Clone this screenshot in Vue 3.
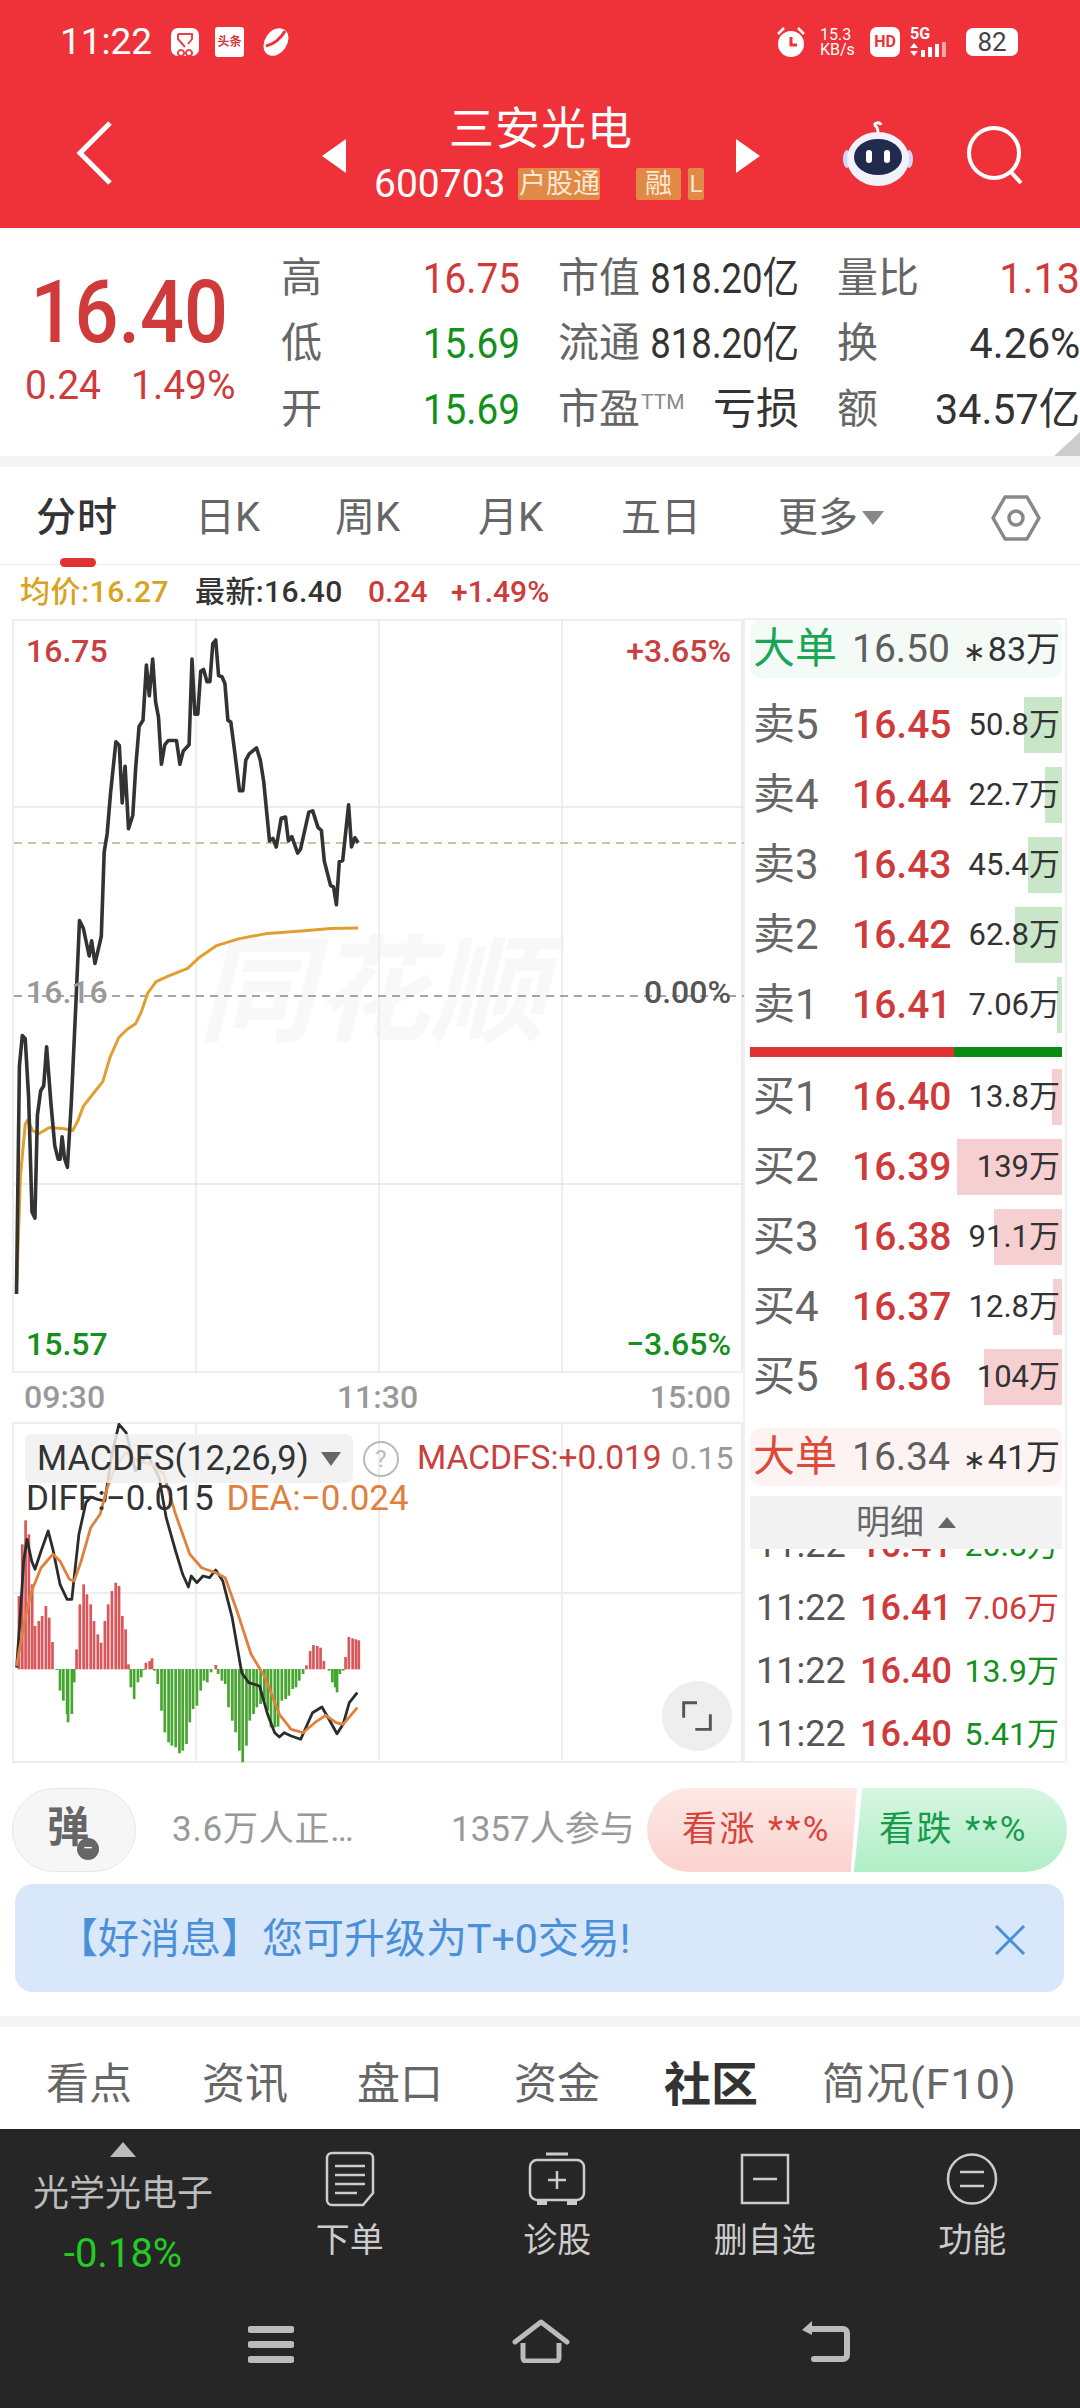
<script setup>
const mapMain = (s) => s.trim().split(/\s+/).map((p) => { const [x, y] = p.split(',').map(Number); return `${(x / 2.063).toFixed(1)},${(460 + y / 1.633).toFixed(1)}` }).join(' ')
const mapMacd = (s) => s.trim().split(/\s+/).map((p) => { const [x, y] = p.split(',').map(Number); return `${(x / 2.119).toFixed(1)},${(1420 + y / 3).toFixed(1)}` }).join(' ')
const priceLine = mapMain(`32,1362 38,990 44,940 50,945 57,1040 64,1228 70,1238 75,1070 82,1030 88,1022 94,958 103,1050 111,1120 118,1142 122,1142 126,1105 131,1140 137,1155 145,1050 155,880 162,752 170,765 182,810 187,785 194,822 207,778 213,640 219,610 226,545 237,460 244,466 250,560 256,500 263,602 272,580 278,500 285,435 293,425 300,335 306,385 313,325 319,395 325,420 331,497 338,465 345,458 362,458 369,497 376,475 388,465 394,325 400,415 406,415 412,345 418,342 425,362 431,362 437,300 443,294 449,352 456,354 462,365 468,425 474,428 482,475 492,540 499,540 505,490 512,480 527,470 535,490 542,525 554,622 561,618 568,632 578,585 587,583 593,622 600,615 612,642 618,635 635,575 643,573 654,600 661,605 667,655 680,695 686,697 692,726 698,656 705,654 717,563 723,632 730,617 737,625`)
const avgLine = mapMain(`32,1360 40,1170 50,1085 55,1078 65,1095 78,1100 100,1090 130,1092 148,1095 158,1080 170,1055 190,1035 210,1015 225,975 243,943 260,930 278,920 290,900 303,870 320,852 345,843 385,830 410,812 445,793 490,782 550,773 620,769 680,765 737,764`)
const diffLine = mapMacd(`33,740 40,600 48,420 55,355 65,420 72,445 85,390 100,330 110,385 125,490 140,535 150,535 165,340 180,245 190,228 205,235 220,240 235,100 250,10 265,35 285,150 310,100 335,170 350,290 370,390 385,460 397,498 403,465 415,485 428,465 442,470 455,447 470,480 490,590 510,755 525,785 548,795 565,880 580,935 590,948 600,935 615,945 635,955 660,875 680,858 695,895 712,938 725,910 738,845 755,815`)
const deaLine = mapMacd(`33,735 50,600 65,510 85,440 110,400 125,420 145,475 155,480 170,420 190,320 210,280 225,200 245,130 265,95 290,120 320,130 345,160 370,280 400,400 425,440 455,455 475,470 500,570 530,700 560,770 590,880 615,925 640,935 665,905 688,883 710,905 725,910 755,860`)
const barData = `38,525 45,370 52,298 59,340 66,490 72,615 80,600 87,585 95,555 102,590 109,663 118,748 125,810 132,840 140,880 142,905 150,880 155,785 160,685 167,550 175,490 182,520 190,550 197,600 205,640 212,665 220,600 227,550 235,510 243,485 250,495 257,585 264,625 270,730 275,800 282,835 290,785 297,770 303,748 307,725 315,720 320,712 325,750 332,790 340,870 347,935 355,965 362,975 370,980 378,998 385,990 393,970 400,905 407,865 415,855 423,810 430,780 437,785 445,755 455,732 460,760 468,780 475,790 482,860 490,900 497,935 505,990 512,1025 520,975 527,900 535,880 542,860 550,850 558,840 565,870 572,920 580,920 587,918 595,840 603,835 610,825 618,805 625,800 632,780 640,760 647,733 655,690 662,672 670,675 677,680 684,720 695,750 702,785 708,800 712,815 718,760 725,750 730,708 737,648 745,652 752,655 758,658`
const bars = barData.split(' ').map((p) => {
  const [x, t] = p.split(',').map(Number)
  const up = t < 745
  return { x: x / 2.119 - 1.3, y: up ? 1420 + t / 3 : 1668, h: Math.abs(t - 745) / 3, fill: up ? '#d9565a' : '#46a62f' }
})
const sells = [
  { l: '卖5', p: '16.45', a: '50.8', w: 38 },
  { l: '卖4', p: '16.44', a: '22.7', w: 17 },
  { l: '卖3', p: '16.43', a: '45.4', w: 34 },
  { l: '卖2', p: '16.42', a: '62.8', w: 47 },
  { l: '卖1', p: '16.41', a: '7.06', w: 5 },
]
const buys = [
  { l: '买1', p: '16.40', a: '13.8', w: 10 },
  { l: '买2', p: '16.39', a: '139', w: 105 },
  { l: '买3', p: '16.38', a: '91.1', w: 68 },
  { l: '买4', p: '16.37', a: '12.8', w: 9 },
  { l: '买5', p: '16.36', a: '104', w: 78 },
]
const ticks = [
  { t: '11:22', p: '16.41', a: '20.8万', c: 'g' },
  { t: '11:22', p: '16.41', a: '7.06万', c: 'r' },
  { t: '11:22', p: '16.40', a: '13.9万', c: 'g' },
  { t: '11:22', p: '16.40', a: '5.41万', c: 'g' },
]
const stats = [
  [{ k: '高', v: '16.75', c: 'red' }, { k: '市值', v: '818.20亿', c: '' }, { k: '量比', v: '1.13', c: 'red' }],
  [{ k: '低', v: '15.69', c: 'green' }, { k: '流通', v: '818.20亿', c: '' }, { k: '换', v: '4.26%', c: '' }],
  [{ k: '开', v: '15.69', c: 'green' }, { k: '市盈', sup: 'TTM', v: '亏损', c: 'plain' }, { k: '额', v: '34.57亿', c: '' }],
]
</script>

<template>
  <div class="page">
    <header class="head">
      <div class="status">
        <span class="clock">11:22</span>
        <svg class="si" width="28" height="28" viewBox="0 0 28 28"><rect width="28" height="28" rx="7" fill="#fff"/><path d="M7 6h14v5l-4 5M7 6v5l7 8M10 22a3 3 0 1 0 .01 0M18 22a3 3 0 1 0 .01 0" fill="none" stroke="#e8434a" stroke-width="2"/></svg>
        <span class="toutiao">头条</span>
        <svg class="si" width="32" height="30" viewBox="0 0 32 30"><ellipse cx="16" cy="15" rx="11" ry="15" transform="rotate(35 16 15)" fill="#fff"/><path d="M6 19C14 17 21 11 25 4" fill="none" stroke="#ef3239" stroke-width="3"/></svg>
        <span class="grow"></span>
        <svg width="32" height="32" viewBox="0 0 32 32"><circle cx="16" cy="18" r="13" fill="#fff"/><path d="M3 8l6-6M29 8l-6-6" stroke="#fff" stroke-width="2.5"/><path d="M16 11v8h6" fill="none" stroke="#ef3239" stroke-width="3"/></svg>
        <span class="speed"><b>15.3</b><b>KB/s</b></span>
        <span class="hd">HD</span>
        <span class="sig">
          <span class="sig-t">5G</span>
          <svg width="46" height="16" viewBox="0 0 46 16"><path d="M0 6l4-5 4 5zM0 9h8l-4 5z" fill="#fff"/><rect x="11" y="8" width="4" height="7" fill="#fff"/><rect x="18" y="5" width="4" height="10" fill="#fff"/><rect x="25" y="2" width="4" height="13" fill="#fff"/><rect x="32" y="0" width="4" height="15" fill="#f8a5a8"/></svg>
        </span>
        <span class="batt"><i>82</i></span>
      </div>
      <div class="nav">
        <svg class="back" width="37" height="64" viewBox="0 0 37 64"><path d="M34 2L4 32l30 30" fill="none" stroke="#fff" stroke-width="5"/></svg>
        <svg class="tri-l" width="24" height="34" viewBox="0 0 24 34"><path d="M24 0v34L0 17z" fill="#fff"/></svg>
        <div class="title">
          <div class="name">三安光电</div>
          <div class="code">
            <span class="num">600703</span>
            <span class="tag t1"><span>户股通</span></span>
            <span class="tag t2">融</span>
            <span class="tag t3">L</span>
          </div>
        </div>
        <svg class="tri-r" width="24" height="34" viewBox="0 0 24 34"><path d="M0 0v34l24-17z" fill="#fff"/></svg>
        <svg class="robot" width="72" height="66" viewBox="0 0 72 66"><path d="M36 14c0-6-1-8-4-9M32 5c2-3 6-3 7 0" fill="none" stroke="#fff" stroke-width="3"/><ellipse cx="5" cy="39" rx="4" ry="9" fill="#cfd8f5"/><ellipse cx="67" cy="39" rx="4" ry="9" fill="#cfd8f5"/><ellipse cx="36" cy="39" rx="31" ry="27" fill="#f2f2fb"/><ellipse cx="36" cy="37" rx="24" ry="18" fill="#1f2a4d"/><rect x="24" y="30" width="6" height="13" rx="3" fill="#fff"/><rect x="42" y="30" width="6" height="13" rx="3" fill="#fff"/></svg>
        <svg class="search" width="60" height="58" viewBox="0 0 60 58"><circle cx="28" cy="27" r="25" fill="none" stroke="#fff" stroke-width="4"/><path d="M44 45l11 12" stroke="#fff" stroke-width="4"/></svg>
      </div>
    </header>

    <section class="stats">
      <div class="quote">
        <div class="big"><span>16.40</span></div>
        <div class="chg"><span>0.24</span><span>1.49%</span></div>
      </div>
      <div class="grid">
        <template v-for="(row, i) in stats" :key="i">
          <div v-for="cell in row" :key="cell.k" class="cell">
            <span class="k">{{ cell.k }}<sup v-if="cell.sup">{{ cell.sup }}</sup></span>
            <span class="v" :class="cell.c">{{ cell.v }}</span>
          </div>
        </template>
      </div>
      <i class="corner"></i>
    </section>
    <div class="band b1"></div>

    <nav class="tabs">
      <span class="on">分时<i></i></span><span>日K</span><span>周K</span><span>月K</span><span>五日</span>
      <span class="more">更多<em></em></span>
      <svg class="hex" width="50" height="46" viewBox="0 0 50 46"><path d="M14 2h22l12 21-12 21H14L2 23z" fill="none" stroke="#888" stroke-width="3.5" stroke-linejoin="round"/><circle cx="25" cy="23" r="7" fill="none" stroke="#888" stroke-width="3.5"/></svg>
    </nav>

    <div class="info">
      <span class="avg">均价:16.27</span>
      <span class="last">最新:16.40</span>
      <span class="red s1">0.24</span>
      <span class="red">+1.49%</span>
    </div>

    <section class="market">
      <div class="charts">
        <div class="main">
          <span class="mark">同花顺</span>
          <svg class="plot" viewBox="12 620 732 752" width="732" height="752">
            <path d="M195 620V1372M378 620V1372M561 620V1372" stroke="#eee" stroke-width="2" fill="none"/>
            <path d="M13 807H743M13 1184H743" stroke="#e6e6e6" stroke-width="1.5" fill="none"/>
            <path d="M13 843H743" stroke="#c8ac7c" stroke-width="1.5" stroke-dasharray="8 6" fill="none"/>
            <path d="M13 996H743" stroke="#888" stroke-width="1.5" stroke-dasharray="8 6" fill="none"/>
            <polyline :points="avgLine" fill="none" stroke="#e0a030" stroke-width="3" stroke-linejoin="round"/>
            <polyline :points="priceLine" fill="none" stroke="#333" stroke-width="3.6" stroke-linejoin="round"/>
          </svg>
          <span class="lb tl red2">16.75</span>
          <span class="lb tr red2">+3.65%</span>
          <span class="lb ml grey">16.16</span>
          <span class="lb mr dim">0.00%</span>
          <span class="lb bl green">15.57</span>
          <span class="lb br green">−3.65%</span>
        </div>
        <div class="axis"><span>09:30</span><span>11:30</span><span>15:00</span></div>
        <div class="macd">
          <svg class="plot" viewBox="12 1422 732 340" width="732" height="340">
            <path d="M195 1422V1762M378 1422V1762M561 1422V1762" stroke="#eee" stroke-width="2" fill="none"/>
            <path d="M13 1592H743" stroke="#eee" stroke-width="2" fill="none"/>
            <rect v-for="(b, i) in bars" :key="i" :x="b.x" :y="b.y" width="2.7" :height="b.h" :fill="b.fill"/>
            <polyline :points="diffLine" fill="none" stroke="#2c2c2c" stroke-width="2.8" stroke-linejoin="round"/>
            <polyline :points="deaLine" fill="none" stroke="#e0803e" stroke-width="2.8" stroke-linejoin="round"/>
          </svg>
          <div class="mtop">
            <span class="chip"><span class="chipt">MACDFS(12,26,9)</span><em></em></span>
            <span class="help">?</span>
            <span class="mv">MACDFS:+0.019</span>
            <span class="mx">0.15</span>
          </div>
          <div class="msub"><span>DIFF:−0.015</span><span class="dea">DEA:−0.024</span></div>
          <span class="expand"><svg width="30" height="30" viewBox="0 0 36 36"><path d="M2 20V2h16M34 16v18H16" fill="none" stroke="#555" stroke-width="3.5"/></svg></span>
        </div>
      </div>

      <aside class="book">
        <div class="big-row gr"><b>大单</b><span class="bp">16.50</span><span class="ba"><i>∗</i>83万</span></div>
        <div class="rows first">
          <div v-for="r in sells" :key="r.l" class="row">
            <i class="bar sell" :style="{ width: r.w + 'px' }"></i>
            <span class="lab">{{ r.l }}</span><span class="pr">{{ r.p }}</span><span class="am">{{ r.a }}万</span>
          </div>
        </div>
        <div class="split"><i></i></div>
        <div class="rows">
          <div v-for="r in buys" :key="r.l" class="row">
            <i class="bar buy" :style="{ width: r.w + 'px' }"></i>
            <span class="lab">{{ r.l }}</span><span class="pr">{{ r.p }}</span><span class="am">{{ r.a }}万</span>
          </div>
        </div>
        <div class="big-row rd"><b>大单</b><span class="bp">16.34</span><span class="ba"><i>∗</i>41万</span></div>
        <div class="detail">明细<em></em></div>
        <div class="ticks">
          <div class="ticks-in">
            <div v-for="(t, i) in ticks" :key="i" class="tick">
              <span class="tt">{{ t.t }}</span><span class="tp">{{ t.p }}</span><span class="ta" :class="t.c">{{ t.a }}</span>
            </div>
          </div>
        </div>
      </aside>
    </section>

    <section class="act">
      <span class="dan">弹<i>−</i></span>
      <span class="txt t-a">3.6万人正…</span>
      <span class="txt t-b">1357人参与</span>
      <span class="vote up">看涨 **%</span>
      <span class="vote down">看跌 **%</span>
    </section>

    <section class="banner">
      <span>【好消息】您可升级为T+0交易!</span>
      <svg width="32" height="30" viewBox="0 0 32 30"><path d="M2 1l28 28M30 1L2 29" stroke="#4a90d9" stroke-width="3" fill="none"/></svg>
    </section>
    <div class="band b2"></div>

    <nav class="tabs2">
      <span>看点</span><span>资讯</span><span>盘口</span><span>资金</span><span class="on2">社区</span><span class="f10">简况(F10)</span>
    </nav>

    <footer class="dock">
      <div class="tools">
        <div class="stock">
          <i class="up-tri"></i>
          <span class="sn">光学光电子</span>
          <span class="sp">-0.18%</span>
        </div>
        <div class="tool">
          <svg width="50" height="56" viewBox="0 0 50 56"><path d="M7 2h36a5 5 0 0 1 5 5v35l-10 12H7a5 5 0 0 1-5-5V7a5 5 0 0 1 5-5z" fill="none" stroke="#ccc" stroke-width="2.5"/><path d="M10 15h30M10 24h30M10 33h30M10 42h22" stroke="#ccc" stroke-width="2.5"/></svg>
          <span>下单</span>
        </div>
        <div class="tool">
          <svg width="58" height="54" viewBox="0 0 58 54"><path d="M18 2h22" stroke="#ccc" stroke-width="3"/><rect x="2" y="8" width="54" height="40" rx="7" fill="none" stroke="#ccc" stroke-width="2.5"/><path d="M29 19v18M20 28h18" stroke="#ccc" stroke-width="2.5"/><path d="M9 48h10v5H9zM39 48h10v5H39z" fill="#ccc"/></svg>
          <span>诊股</span>
        </div>
        <div class="tool">
          <svg width="50" height="52" viewBox="0 0 50 52"><rect x="2" y="2" width="46" height="48" fill="none" stroke="#ccc" stroke-width="2.5"/><path d="M13 26h24" stroke="#ccc" stroke-width="2.5"/></svg>
          <span>删自选</span>
        </div>
        <div class="tool">
          <svg width="52" height="52" viewBox="0 0 52 52"><ellipse cx="26" cy="26" rx="24" ry="24.5" fill="none" stroke="#ccc" stroke-width="2.5"/><path d="M14 19h24M14 33h24" stroke="#ccc" stroke-width="2.5"/></svg>
          <span>功能</span>
        </div>
      </div>
      <div class="sysnav">
        <svg width="46" height="37" viewBox="0 0 46 37"><path d="M3 3.5h40M3 18.5h40M3 33.5h40" stroke="#bbb" stroke-width="7" stroke-linecap="round"/></svg>
        <svg width="58" height="44" viewBox="0 0 58 44"><path d="M3 23L29 3l26 20" fill="none" stroke="#bbb" stroke-width="5" stroke-linejoin="round" stroke-linecap="round"/><path d="M11 24v15a3 3 0 0 0 3 3h30a3 3 0 0 0 3-3V24" fill="none" stroke="#bbb" stroke-width="5"/></svg>
        <svg class="ret" width="50" height="42" viewBox="0 0 50 42"><path d="M11 0L1 9l10 5z" fill="#bbb"/><path d="M9 8h33a4 4 0 0 1 4 4v22a4 4 0 0 1-4 4H13" fill="none" stroke="#bbb" stroke-width="6" stroke-linecap="round"/></svg>
      </div>
    </footer>
  </div>
</template>

<style scoped>
.page { width: 1080px; height: 2408px; overflow: hidden; background: #fff; display: flex; flex-direction: column; font-family: Roboto, "Noto Sans CJK SC", sans-serif; color: #333; line-height: 1.2; }
.red { color: #cf3a3a; }
.red2 { color: #c84040; }
.green { color: #14901c; }
.grey { color: #999; }
.dim { color: #555; }

.head { height: 228px; flex: none; background: #ef3239; color: #fff; display: flex; flex-direction: column; }
.status { height: 84px; padding: 0 62px 0 60px; display: flex; align-items: center; }
.clock { font-size: 37px; width: 111px; }
.si { flex: none; margin-right: 16px; }
.toutiao { width: 29px; height: 30px; margin-right: 16px; background: #fff; color: #d8353b; font-size: 12px; line-height: 30px; text-align: center; font-weight: 700; border-radius: 3px; white-space: nowrap; overflow: hidden; }
.grow { flex: 1; }
.speed { display: flex; flex-direction: column; width: 36px; margin: 0 14px 0 13px; font-size: 16px; line-height: 15px; }
.speed b { font-weight: 400; white-space: nowrap; }
.hd { width: 30px; height: 30px; background: #fff; color: #ef3239; border-radius: 7px; font-size: 16px; font-weight: 700; line-height: 30px; text-align: center; margin-right: 10px; }
.sig { width: 46px; height: 32px; display: flex; flex-direction: column; margin-right: 10px; }
.sig-t { font-size: 16px; line-height: 16px; font-weight: 700; }
.batt { width: 52px; height: 28px; background: #fff; border-radius: 7px; color: #444; font-size: 26px; line-height: 28px; text-align: center; }
.batt i { font-style: normal; }

.nav { flex: 1; display: flex; align-items: flex-start; position: relative; padding-left: 76px; }
.back { margin-top: 37px; flex: none; }
.tri-l { margin: 55px 0 0 209px; flex: none; }
.title { width: 390px; flex: none; display: flex; flex-direction: column; align-items: center; }
.name { font-size: 45px; line-height: 60px; margin-top: 16px; letter-spacing: 1px; }
.code { display: flex; align-items: center; height: 32px; margin-top: 8px; width: 330px; margin-left: -4px; }
.num { font-size: 39px; line-height: 32px; width: 144px; }
.tag { background: #e08a45; color: #fbe7d3; height: 32px; line-height: 32px; font-size: 27px; border-radius: 2px; overflow: hidden; display: flex; justify-content: flex-end; white-space: nowrap; }
.t1 { width: 82px; }
.t2 { width: 45px; margin-left: 36px; justify-content: center; }
.t3 { width: 16px; margin-left: 7px; justify-content: center; font-size: 24px; }
.tri-r { margin-top: 55px; flex: none; }
.robot { margin: 36px 0 0 82px; flex: none; }
.search { margin: 42px 0 0 52px; flex: none; }

.stats { height: 228px; flex: none; display: flex; position: relative; overflow: hidden; }
.quote { width: 281px; flex: none; color: #cf3a3a; }
.big { font-size: 88px; line-height: 100px; margin-top: 34px; width: 258px; text-align: center; font-weight: 500; }
.big span { display: inline-block; transform: scaleX(.88); }
.chg { display: flex; font-size: 41px; line-height: 44px; margin: 1px 0 0 25px; gap: 30px; }
.chg span { display: inline-block; transform: scaleX(.95); transform-origin: left center; width: 76px; white-space: nowrap; }
.grid { flex: 1; display: grid; grid-template-columns: 239px 241px 243px; grid-auto-rows: 65.5px; column-gap: 38px; padding-top: 17px; }
.cell { display: flex; justify-content: space-between; align-items: center; white-space: nowrap; }
.cell:nth-child(3n + 1) .v { transform: scaleX(.9); }
.cell:nth-child(3n) .v { transform: scaleX(.96); }
.k { font-size: 41px; color: #666; line-height: 50px; flex: none; }
.k sup { font-size: 21px; color: #888; vertical-align: 14px; line-height: 0; margin-left: 1px; }
.v { font-size: 43px; line-height: 50px; display: inline-block; margin-left: -40px; transform: scaleX(.85); transform-origin: right center; color: #333; }
.v.red { color: #cf3a3a; }
.v.green { color: #14901c; }
.v.plain { transform: none; }
.corner { position: absolute; right: 0; bottom: 0; width: 26px; height: 24px; background: #ccc; clip-path: polygon(100% 0, 100% 100%, 0 100%); }

.band { background: #f4f4f4; flex: none; }
.b1 { height: 11px; }
.b2 { height: 11px; margin-top: 24px; }

.tabs { height: 98px; box-sizing: border-box; flex: none; border-bottom: 1px solid #eee; padding: 4px 0 0 36px; display: grid; grid-template-columns: 159px 140px 143px 143px 157px 213px 50px; align-items: center; font-size: 40px; color: #666; position: relative; }
.tabs .on { color: #333; font-weight: 500; position: relative; letter-spacing: 1px; }
.tabs .on i { position: absolute; left: 24px; bottom: -25px; width: 36px; height: 9px; border-radius: 5px; background: #e03232; }
.more em { display: inline-block; margin-left: 4px; vertical-align: 6px; border: 11px solid transparent; border-top: 14px solid #888; border-bottom: 0; }

.info { height: 53px; flex: none; display: flex; align-items: center; padding-left: 20px; font-size: 30px; font-weight: 500; }
.avg { color: #d9a21f; width: 175px; letter-spacing: .6px; white-space: nowrap; }
.last { width: 173px; color: #333; letter-spacing: .4px; white-space: nowrap; }
.s1 { width: 83px; }

.market { height: 1145px; flex: none; display: flex; padding-left: 12px; }
.charts { width: 731px; flex: none; display: flex; flex-direction: column; }
.main { height: 754px; position: relative; border: 2px solid #eee; box-sizing: border-box; margin-top: 1px; }
.plot { position: absolute; left: -1px; top: -1px; display: block; }
.mark { position: absolute; left: 184px; top: 306px; font-size: 116px; line-height: 130px; font-weight: 700; font-style: italic; color: #f8f8f8; white-space: nowrap; }
.lb { position: absolute; font-size: 32px; line-height: 38px; font-weight: 500; white-space: nowrap; }
.tl { left: 12px; top: 11px; }
.tr { right: 10px; top: 11px; }
.ml { left: 12px; top: 352px; }
.mr { right: 10px; top: 352px; }
.bl { left: 12px; top: 704px; }
.br { right: 10px; top: 704px; }
.axis { height: 49px; flex: none; display: flex; justify-content: space-between; align-items: center; padding: 0 12px; font-size: 32px; color: #999; font-weight: 500; }
.macd { height: 341px; position: relative; border: 2px solid #eee; box-sizing: border-box; }
.mtop { position: relative; display: flex; align-items: center; margin: 10px 0 0 11px; height: 49px; }
.chip { width: 328px; height: 49px; background: rgba(240, 240, 240, .85); border-radius: 6px; display: flex; align-items: center; padding-left: 12px; box-sizing: border-box; font-size: 34.5px; white-space: nowrap; flex: none; }
.chipt { width: 284px; flex: none; }
.chip em, .detail em { display: inline-block; }
.chip em { border: 10px solid transparent; border-top: 14px solid #666; border-bottom: 0; }
.help { width: 32px; height: 32px; border: 2px solid #bbb; border-radius: 50%; color: #bbb; font-size: 24px; line-height: 32px; text-align: center; margin-left: 10px; flex: none; }
.mv { font-size: 33.5px; color: #c84040; margin-left: 18px; width: 254px; flex: none; white-space: nowrap; }
.mx { font-size: 32px; color: #999; }
.msub { position: relative; display: flex; margin: -4px 0 0 12px; font-size: 35px; line-height: 40px; gap: 13px; white-space: nowrap; color: #333; }
.dea { color: #e0803e; }
.expand { position: absolute; right: 9px; top: 257px; width: 70px; height: 70px; border-radius: 50%; background: #eee; display: flex; align-items: center; justify-content: center; }

.book { width: 324px; flex: none; box-sizing: border-box; border: 2px solid #f0f0f0; padding: 0 3px 0 5px; }
.big-row { height: 58px; border-radius: 10px; display: flex; align-items: center; padding: 0 2px 0 3px; }
.big-row b { font-weight: 400; font-size: 42px; width: 99px; flex: none; }
.big-row.gr { background: #f4faf6; }
.big-row.gr b { color: #1aa656; }
.big-row.rd { background: #fdf3f2; margin-top: 23px; }
.big-row.rd b { color: #dd4a3a; }
.bp { font-size: 39px; color: #5f5f5f; width: 104px; flex: none; }
.ba { font-size: 34px; flex: 1; text-align: right; color: #333; white-space: nowrap; }
.ba i { font-style: normal; font-size: 27px; margin-right: 2px; }
.rows.first { margin-top: 19px; }
.row { height: 56px; margin-bottom: 14px; position: relative; display: flex; align-items: center; padding: 0 2px 0 3px; }
.bar { position: absolute; right: 0; top: 0; bottom: 0; }
.sell { background: #c9e6c9; }
.buy { background: #f6d0d0; }
.lab { position: relative; font-size: 42px; color: #666; width: 99px; flex: none; white-space: nowrap; }
.pr { position: relative; font-size: 39px; font-weight: 500; color: #cf3a3a; width: 104px; flex: none; }
.am { position: relative; font-size: 31px; flex: 1; text-align: right; color: #333; white-space: nowrap; }
.split { height: 10px; margin: 1px 0 12px; background: #e03232; position: relative; }
.split i { position: absolute; right: 0; top: 0; bottom: 0; width: 108px; background: #0a8c14; }
.detail { height: 53px; margin-top: 10px; background: #f2f2f2; font-size: 34px; color: #666; display: flex; align-items: center; justify-content: center; }
.detail em { margin-left: 14px; border: 9px solid transparent; border-bottom: 11px solid #666; border-top: 0; }
.ticks { height: 211px; overflow: hidden; }
.ticks-in { margin-top: -35px; }
.tick { height: 63px; display: flex; align-items: center; padding: 0 3px 0 6px; font-size: 36px; font-weight: 500; white-space: nowrap; }
.tt { width: 104px; flex: none; color: #555; font-weight: 400; }
.tp { width: 97px; flex: none; color: #cf3a3a; }
.ta { flex: 1; text-align: right; font-size: 32px; font-weight: 400; }
.ta.g { color: #14901c; }
.ta.r { color: #cf3a3a; }

.act { height: 84px; flex: none; margin-top: 25px; position: relative; display: flex; align-items: center; padding-left: 12px; }
.dan { width: 124px; height: 84px; box-sizing: border-box; border: 1px solid #e8e8e8; background: #f6f6f6; border-radius: 42px; font-size: 42px; font-weight: 700; color: #666; padding: 10px 0 0 34px; position: relative; line-height: 58px; flex: none; }
.dan i { position: absolute; left: 64px; top: 49px; width: 22px; height: 22px; border-radius: 50%; background: #666; color: #fff; font-size: 18px; line-height: 20px; text-align: center; font-style: normal; font-weight: 400; }
.txt { font-size: 35px; color: #999; white-space: nowrap; flex: none; }
.t-a { margin-left: 36px; width: 279px; letter-spacing: .8px; }
.t-b { width: 196px; }
.vote { height: 84px; display: flex; align-items: center; font-size: 35px; letter-spacing: 2.4px; white-space: pre; box-sizing: border-box; flex: none; }
.up { width: 210px; background: linear-gradient(#fde9e6, #fbd2ce); color: #d8433b; border-radius: 42px 0 0 42px; padding-left: 35px; clip-path: polygon(0 0, 100% 0, 97% 100%, 0 100%); }
.down { width: 213px; margin-left: -3px; background: linear-gradient(#d6f6e2, #b0eec6); color: #189a4c; border-radius: 0 42px 42px 0; padding-left: 25px; clip-path: polygon(4% 0, 100% 0, 100% 100%, 0 100%); }

.banner { height: 108px; box-sizing: border-box; flex: none; margin: 12px 16px 0 15px; border-radius: 18px; background: #d8e7fa; display: flex; align-items: center; justify-content: space-between; padding: 3px 38px 0 42px; color: #4a90d9; font-size: 41px; white-space: nowrap; }

.tabs2 { height: 102px; box-sizing: border-box; flex: none; padding: 14px 0 0 46px; display: grid; grid-template-columns: 156px 155px 157px 150px 158px 1fr; align-items: center; font-size: 43px; color: #666; white-space: nowrap; }
.on2 { font-size: 47px; font-weight: 700; color: #333; }
.f10 { letter-spacing: 1px; }

.dock { flex: 1; background: #262626; display: flex; flex-direction: column; color: #ccc; }
.tools { height: 190px; display: grid; grid-template-columns: 246px repeat(4, 207.5px); }
.stock { display: flex; flex-direction: column; align-items: center; padding-top: 13px; }
.up-tri { width: 0; height: 0; border: 13px solid transparent; border-bottom: 15px solid #bbb; border-top: 0; }
.sn { font-size: 36px; line-height: 46px; margin-top: 14px; color: #bbb; }
.sp { font-size: 40px; line-height: 46px; margin-top: 14px; color: #22cc22; }
.tool { display: flex; flex-direction: column; align-items: center; padding-top: 22px; font-size: 34px; }
.tool svg { height: 56px; }
.tool span { margin-top: 11px; line-height: 44px; }
.sysnav { height: 44px; display: flex; align-items: flex-end; padding-left: 248px; gap: 218px; }
.sysnav svg { flex: none; }
.ret { margin-left: 13px; }
</style>

<style>
html, body { background: #fff; }
</style>
